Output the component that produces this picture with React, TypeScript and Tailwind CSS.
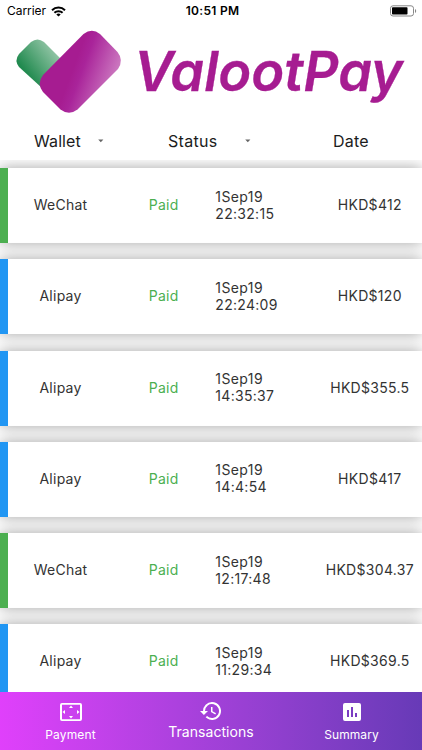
import React from 'react';

type Row = { wallet: string; time: string; amount: string };

const rows: Row[] = [
  { wallet: 'WeChat', time: '22:32:15', amount: 'HKD$412' },
  { wallet: 'Alipay', time: '22:24:09', amount: 'HKD$120' },
  { wallet: 'Alipay', time: '14:35:37', amount: 'HKD$355.5' },
  { wallet: 'Alipay', time: '14:4:54', amount: 'HKD$417' },
  { wallet: 'WeChat', time: '12:17:48', amount: 'HKD$304.37' },
  { wallet: 'Alipay', time: '11:29:34', amount: 'HKD$369.5' },
];

function StatusBar() {
  return (
    <div className="flex h-[22px] shrink-0 items-center text-[12px] leading-none text-black">
      <div className="flex flex-1 items-center gap-[5px] pl-[7px]">
        <span className="tracking-[-0.05px]">Carrier</span>
        <svg width="15" height="11" viewBox="0 0 15 11" fill="none" stroke="#000" strokeWidth="2">
          <path d="M1 4.2a9.3 9.3 0 0 1 13 0" />
          <path d="M3.4 6.8a5.9 5.9 0 0 1 8.2 0" />
          <path d="M7.5 10.6 5.3 8.5a3.2 3.2 0 0 1 4.4 0z" fill="#000" stroke="none" />
        </svg>
      </div>
      <span className="pl-px font-semibold tracking-[0.3px]">10:51 PM</span>
      <div className="flex flex-1 justify-end pr-[5px]">
        <svg width="28" height="12" viewBox="0 0 28 12">
          <rect x="1.5" y="0.8" width="23" height="10.2" rx="2.5" fill="none" stroke="#888" />
          <rect x="3" y="2.3" width="15.5" height="7.2" rx="0.8" fill="#000" />
          <path d="M26 4v4c1.6-.6 1.6-3.4 0-4z" fill="#888" />
        </svg>
      </div>
    </div>
  );
}

function Logo() {
  return (
    <svg className="shrink-0" width="422" height="98" viewBox="0 22 422 98" role="img">
      <defs>
        <linearGradient id="green" gradientUnits="userSpaceOnUse" x1="21" y1="66" x2="50" y2="44">
          <stop offset="0" stopColor="#218a4f" />
          <stop offset="1" stopColor="#92c5a6" />
        </linearGradient>
        <linearGradient id="purple" gradientUnits="userSpaceOnUse" x1="74" y1="66" x2="117" y2="82">
          <stop offset="0" stopColor="#a61c91" />
          <stop offset="0.2" stopColor="#a9249a" />
          <stop offset="1" stopColor="#cf80c3" />
        </linearGradient>
      </defs>
      <path d="M19 54 31 42Q37.500 37 44 42L75 73 53 98 19 67Q14 60.500 19 54Z" fill="url(#green)" />
      <path d="M43 75 83.500 34Q92 27.500 100 34L117.500 52Q124 60 118 69L77.500 109.500Q69 116 60.500 109.500L43 92Q36.500 83.500 43 75Z" fill="url(#purple)" />
      <text
        x="134"
        y="91"
        textLength="269"
        lengthAdjust="spacingAndGlyphs"
        fill="#a61c91"
        stroke="#a61c91"
        strokeWidth="0.3"
        className="text-[55px] font-semibold italic [font-feature-settings:'cv11']"
      >
        ValootPay
      </text>
    </svg>
  );
}

function Caret() {
  return (
    <svg width="6" height="4" viewBox="0 0 6 4">
      <path d="M0.200 0.500h5.200L2.800 3.200z" fill="#666" />
    </svg>
  );
}

function TransactionCard({ wallet, time, amount }: Row) {
  return (
    <div className="flex h-[75px] shrink-0 items-center bg-white text-[14px] leading-[17px] text-[#333] shadow-[0_0_14px_rgba(0,0,0,0.36)]">
      <div className={`h-full w-[8.300px] ${wallet === 'WeChat' ? 'bg-[#4caf50]' : 'bg-[#2196f3]'}`} />
      <div className="w-[104.500px] pb-[2px] text-center tracking-[0.25px]">{wallet}</div>
      <div className="w-[102.500px] pb-[2px] pl-[36px] tracking-[0.25px] text-[#4caf50]">Paid</div>
      <div className="w-[102.500px] pb-[2px] tracking-[0.3px]">
        <div className="tracking-[0.4px]">1Sep19</div>
        <div>{time}</div>
      </div>
      <div className="w-[104px] pb-[2px] text-center tracking-[0.3px]">{amount}</div>
    </div>
  );
}

function BottomBar() {
  return (
    <nav className="flex h-[58.500px] shrink-0 bg-linear-to-r from-[#e040fb] to-[#673ab7] text-white">
      <div className="flex w-[141px] flex-col items-center pt-[8px]">
        <svg width="24" height="24" viewBox="0 0 24 24" fill="#fff">
          <path d="M21 3H3a2 2 0 0 0-2 2v14a2 2 0 0 0 2 2h18a2 2 0 0 0 2-2V5a2 2 0 0 0-2-2zm0 16.300H3V4.700h18zM12 5.500 10 8h4zM18 10v4l2.500-2zM6 10l-2.500 2L6 14zM14 16h-4l2 2.500z" />
        </svg>
        <span className="mt-[3px] text-[12px] leading-[15px] tracking-[0.15px]">Payment</span>
      </div>
      <div className="flex w-[140px] flex-col items-center pt-[7px]">
        <svg width="24" height="24" viewBox="0 0 24 24" fill="#fff">
          <path d="M13 3a9 9 0 0 0-9 9H1l3.900 3.900L9 12H6a7 7 0 1 1 2.060 4.940l-1.420 1.420A9 9 0 1 0 13 3zm-1 5v5l4.280 2.540.720-1.210-3.500-2.080V8z" />
        </svg>
        <span className="text-[14px] leading-[17px] tracking-[0.05px]">Transactions</span>
      </div>
      <div className="flex w-[141px] flex-col items-center pt-[8px]">
        <svg width="24" height="24" viewBox="0 0 24 24" fill="#fff">
          <path d="M19 3H5a2 2 0 0 0-2 2v14a2 2 0 0 0 2 2h14a2 2 0 0 0 2-2V5a2 2 0 0 0-2-2zM9 17H7v-7h2zm4 0h-2V7h2zm4 0h-2v-4h2z" />
        </svg>
        <span className="mt-[3px] text-[12px] leading-[15px] tracking-[0.1px]">Summary</span>
      </div>
    </nav>
  );
}

export default function App() {
  return (
    <div className="flex h-[750px] w-[422px] flex-col overflow-hidden bg-white font-['Inter',sans-serif]">
      <StatusBar />
      <Logo />
      <header className="flex h-[40px] shrink-0 items-center text-[16px] text-[#1c1c1c]">
        <div className="flex w-[168px] items-center pl-[34px] pt-[2px]">
          <span className="w-[64px] tracking-[0.1px]">Wallet</span>
          <Caret />
        </div>
        <div className="flex w-[165px] items-center pt-[2px]">
          <span className="w-[77px] tracking-[0.3px]">Status</span>
          <Caret />
        </div>
        <span className="pt-[2px] tracking-[0.2px]">Date</span>
      </header>
      <main className="flex min-h-0 flex-1 flex-col gap-[16.300px] overflow-hidden pt-[8px]">
        {rows.map((row) => (
          <TransactionCard key={row.time} {...row} />
        ))}
      </main>
      <BottomBar />
    </div>
  );
}
